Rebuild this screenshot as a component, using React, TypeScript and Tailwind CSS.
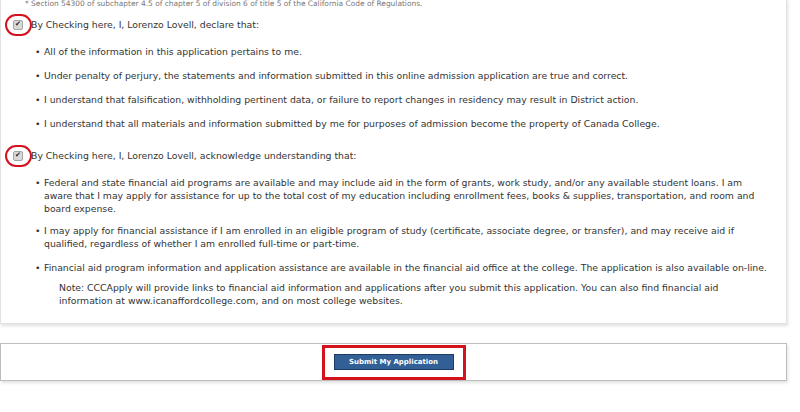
import type { ReactNode } from 'react';

const font = { fontFamily: '"DejaVu Sans", Verdana, sans-serif' };

function Bullet({ children, className = '' }: { children: ReactNode; className?: string }) {
  return (
    <li className={`flex ${className}`}>
      <span className="w-[9px] shrink-0">•</span>
      <span>{children}</span>
    </li>
  );
}

function CheckLine({ children }: { children: ReactNode }) {
  return (
    <div className="relative flex items-center pl-[12px]">
      <span className="flex h-[10px] w-[10px] items-center justify-center rounded-[2px] border border-[#a5a5a5] bg-[#d9d9d9] text-[7px] leading-none text-[#222]">
        ✔
      </span>
      <span className="ml-[8px]">{children}</span>
      <span className="absolute left-[4px] top-1/2 h-[22px] w-[27px] -translate-y-1/2 rounded-full border-[2.5px] border-[#d4121e]" />
    </div>
  );
}

export default function App() {
  return (
    <div className="h-[412px] w-[800px] overflow-hidden bg-white text-[9.3px] leading-[13px] text-[#333]" style={font}>
      <div className="mr-[13px] border-x border-b border-[#e2e2e2] pb-[16px] shadow-[1px_2px_3px_rgba(0,0,0,0.12)]">
        <p className="-mt-[2px] pl-[24px] text-[7.45px] leading-[12px] text-[#777]">
          * Section 54300 of subchapter 4.5 of chapter 5 of division 6 of title 5 of the California Code of Regulations.
        </p>
        <div className="mt-[8px]">
          <CheckLine>By Checking here, I, Lorenzo Lovell, declare that:</CheckLine>
        </div>
        <ul className="mt-[14px] flex flex-col gap-[11px] pl-[34px] pr-[16px]">
          <Bullet>All of the information in this application pertains to me.</Bullet>
          <Bullet>
            Under penalty of perjury, the statements and information submitted in this online admission application are true and correct.
          </Bullet>
          <Bullet>
            I understand that falsification, withholding pertinent data, or failure to report changes in residency may result in District action.
          </Bullet>
          <Bullet>
            I understand that all materials and information submitted by me for purposes of admission become the property of Canada College.
          </Bullet>
        </ul>
        <div className="mt-[19px]">
          <CheckLine>By Checking here, I, Lorenzo Lovell, acknowledge understanding that:</CheckLine>
        </div>
        <ul className="mt-[14px] flex flex-col gap-[9px] pl-[34px] pr-[16px]">
          <Bullet>
            Federal and state financial aid programs are available and may include aid in the form of grants, work study, and/or any available student loans. I am aware that I may apply for assistance for up to the total cost of my education including enrollment fees, books &amp; supplies, transportation, and room and board expense.
          </Bullet>
          <Bullet>
            I may apply for financial assistance if I am enrolled in an eligible program of study (certificate, associate degree, or transfer), and may receive aid if qualified, regardless of whether I am enrolled full-time or part-time.
          </Bullet>
          <Bullet className="mt-[2px]">
            Financial aid program information and application assistance are available in the financial aid office at the college. The application is also available on-line.
          </Bullet>
        </ul>
        <p className="mt-[7px] pl-[58px] pr-[60px]">
          Note: CCCApply will provide links to financial aid information and applications after you submit this application. You can also find financial aid information at www.icanaffordcollege.com, and on most college websites.
        </p>
      </div>
      <div className="mr-[13px] mt-[19px] flex h-[38px] items-center justify-center border border-[#bdbdbd] shadow-[1px_2px_3px_rgba(0,0,0,0.12)]">
        <div className="flex h-[35px] w-[144px] items-center justify-center border-[3px] border-[#d4121e]">
          <button className="h-[16px] w-[120px] border border-[#1d3d66] bg-[#315f96] text-[7px] font-bold text-white">
            Submit My Application
          </button>
        </div>
      </div>
    </div>
  );
}
